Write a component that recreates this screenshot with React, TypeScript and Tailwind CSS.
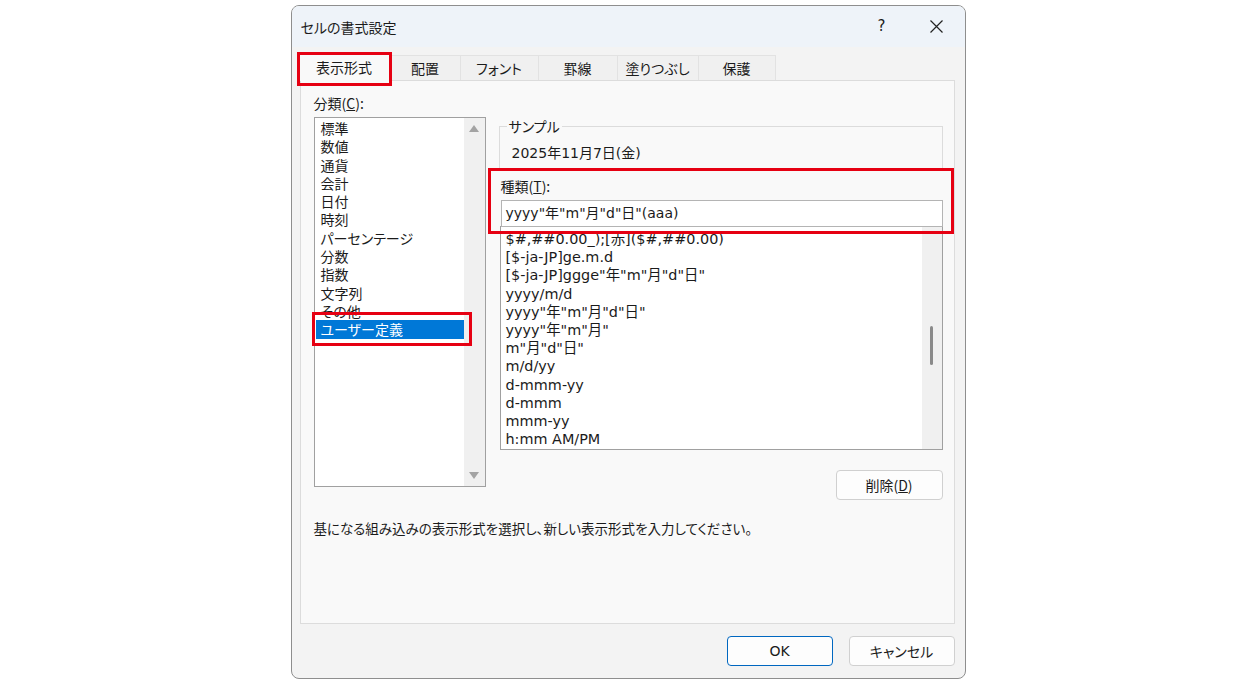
import React from "react";

const categories = [
  "標準",
  "数値",
  "通貨",
  "会計",
  "日付",
  "時刻",
  "パーセンテージ",
  "分数",
  "指数",
  "文字列",
  "その他",
  "ユーザー定義",
];

const formats = [
  '$#,##0.00_);[赤]($#,##0.00)',
  "[$-ja-JP]ge.m.d",
  '[$-ja-JP]ggge"年"m"月"d"日"',
  "yyyy/m/d",
  'yyyy"年"m"月"d"日"',
  'yyyy"年"m"月"',
  'm"月"d"日"',
  "m/d/yy",
  "d-mmm-yy",
  "d-mmm",
  "mmm-yy",
  "h:mm AM/PM",
];

const tabs = [
  { label: "表示形式", w: "w-[93px]" },
  { label: "配置", w: "w-[70px]" },
  { label: "フォント", w: "w-[78px]" },
  { label: "罫線", w: "w-[79px]" },
  { label: "塗りつぶし", w: "w-[81px]" },
  { label: "保護", w: "w-[77px]" },
];

const Tri = ({ up }: { up?: boolean }) => (
  <svg width="10" height="7" viewBox="0 0 10 7">
    <path d={up ? "M5 0 L10 7 L0 7 Z" : "M0 0 L10 0 L5 7 Z"} fill="#a3a3a3" />
  </svg>
);

export default function App() {
  return (
    <div className="w-full h-[685px] bg-white flex justify-center font-['Noto_Sans_CJK_JP',sans-serif] [font-feature-settings:'palt'] text-[14px] text-[#1b1b1b]">
      <div className="relative mt-[5px] w-[675px] h-[674px] rounded-[8px] border border-[#8e8e8e] bg-[#f3f3f3] overflow-hidden flex flex-col">
        {/* title bar */}
        <div className="h-[41px] bg-[#eef3f9] flex items-center pl-[9px] pr-[22px]">
          <span className="leading-[18px]">セルの書式設定</span>
          <span className="ml-auto mr-[44px] font-['DejaVu_Sans',sans-serif] text-[15px]">?</span>
          <svg width="13" height="13" viewBox="0 0 13 13">
            <path d="M0.5 0.5 L12.5 12.5 M12.5 0.5 L0.5 12.5" stroke="#222" strokeWidth="1.2" />
          </svg>
        </div>

        {/* tabs */}
        <div className="mt-[6px] ml-[6px] flex items-end h-[27px] relative z-10">
          {tabs.map((t, i) =>
            i === 0 ? (
              <div
                key={t.label}
                className={`${t.w} h-[28px] mb-[-1px] bg-[#f9f9f9] border border-b-0 border-[#dcdcdc] flex items-center justify-center`}
              >
                {t.label}
              </div>
            ) : (
              <div
                key={t.label}
                className={`${t.w} h-[25px] bg-[#f0f0f0] border-t border-r border-[#e2e2e2] flex items-center justify-center`}
              >
                {t.label}
              </div>
            )
          )}
        </div>

        {/* panel */}
        <div className="ml-[8px] w-[655px] h-[544px] bg-[#f9f9f9] border border-[#dcdcdc] pl-[13px] pt-[13px]">
          <div className="flex items-start">
            {/* left column */}
            <div className="w-[172px]">
              <div className="leading-[18px]">
                分類(<span className="underline">C</span>):
              </div>
              <div className="mt-[5px] h-[370px] border border-[#a0a0a0] bg-white flex">
                <div className="flex-1 pt-[1px] pl-[1px]">
                  {categories.map((c) => (
                    <div
                      key={c}
                      className={
                        c === "ユーザー定義"
                          ? "h-[18.3px] leading-[18.3px] pl-[5px] bg-[#0078d7] text-white"
                          : "h-[18.3px] leading-[18.3px] pl-[5px]"
                      }
                    >
                      {c}
                    </div>
                  ))}
                </div>
                <div className="w-[21px] bg-[#f0f0f0] flex flex-col items-center justify-between pt-[7px] pb-[7px]">
                  <Tri up />
                  <Tri />
                </div>
              </div>
            </div>

            {/* right column */}
            <div className="ml-[13px] w-[444px] pt-[23px]">
              <fieldset className="h-[54px] border border-[#dcdcdc] pl-[7px] pr-0 m-0">
                <legend className="px-[2px] leading-[18px]">サンプル</legend>
                <div className="mt-[9px] pl-[5px] leading-[18px] font-['DejaVu_Sans','Noto_Sans_CJK_JP',sans-serif] [font-feature-settings:normal]">
                  2025年11月7日(金)
                </div>
              </fieldset>
              <div className="mt-[6px] ml-[2px] leading-[18px]">
                種類(<span className="underline">T</span>):
              </div>
              <div className="mt-[5px] ml-[2px] w-[442px] h-[27px] border border-[#b4b4b4] bg-white flex items-center pl-[4px] font-['DejaVu_Sans','Noto_Sans_CJK_JP',sans-serif] [font-feature-settings:normal] relative z-10">
                yyyy"年"m"月"d"日"(aaa)
              </div>
              <div className="mt-[-1px] ml-[1px] w-[443px] h-[224px] border border-[#a0a0a0] bg-white flex overflow-hidden">
                <div className="flex-1 pt-[3px] pl-[5px] text-[14.4px] font-['DejaVu_Sans','Noto_Sans_CJK_JP',sans-serif] [font-feature-settings:normal]">
                  {formats.map((f) => (
                    <div key={f} className="h-[18.2px] leading-[18.2px] whitespace-nowrap">
                      {f}
                    </div>
                  ))}
                </div>
                <div className="w-[20px] bg-[#f0f0f0] flex justify-center pt-[99px]">
                  <div className="w-[3px] h-[39px] rounded-full bg-[#8a8a8a]" />
                </div>
              </div>
              <div className="mt-[20px] flex justify-end">
                <button className="w-[107px] h-[30px] rounded-[4px] border border-[#d0d0d0] bg-[#fdfdfd] leading-[18px]">
                  削除(<span className="underline">D</span>)
                </button>
              </div>
            </div>
          </div>
          <div className="mt-[19px] leading-[18px] text-[13.5px]">
            基になる組み込みの表示形式を選択し、新しい表示形式を入力してください。
          </div>
        </div>

        {/* footer */}
        <div className="mt-[12px] flex justify-end gap-[16px] pr-[10px]">
          <button className="w-[106px] h-[30px] rounded-[4px] border border-[#0067c0] bg-[#fdfdfd] font-['DejaVu_Sans',sans-serif]">
            OK
          </button>
          <button className="w-[106px] h-[30px] rounded-[4px] border border-[#d0d0d0] bg-[#fdfdfd]">
            キャンセル
          </button>
        </div>

        {/* red annotation boxes */}
        <div className="absolute z-20 left-[5px] top-[46px] w-[95px] h-[34px] border-[3px] border-[#e60012]" />
        <div className="absolute z-20 left-[20px] top-[306px] w-[160px] h-[34px] border-[3px] border-[#e60012]" />
        <div className="absolute z-20 left-[196px] top-[162px] w-[466px] h-[66px] border-[3px] border-[#e60012]" />
      </div>
    </div>
  );
}
